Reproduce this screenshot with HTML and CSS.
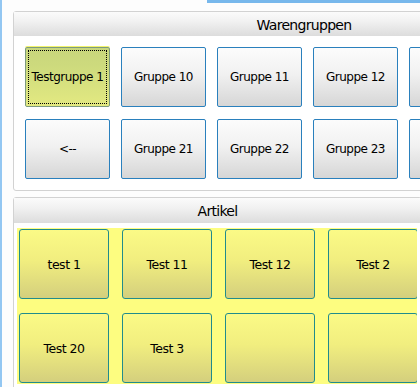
FILE: index.html
```html
<!DOCTYPE html>
<html lang="de">
<head>
    <meta charset="UTF-8">
    <meta name="viewport" content="width=device-width, initial-scale=1.0">
    <title>Kasse</title>
    <link rel="stylesheet" href="styles.css">
</head>
<body>
    <div class="window">
        <div class="top-line"></div>
        <div class="side-edge"></div>
        <div class="content">
            <!-- Warengruppen -->
            <div class="panel panel-groups">
                <div class="panel-header">Warengruppen</div>
                <div class="group-grid">
                    <button class="group-btn active"><span>Testgruppe 1</span></button>
                    <button class="group-btn">Gruppe 10</button>
                    <button class="group-btn">Gruppe 11</button>
                    <button class="group-btn">Gruppe 12</button>
                    <button class="group-btn"></button>
                    <button class="group-btn">&lt;--</button>
                    <button class="group-btn">Gruppe 21</button>
                    <button class="group-btn">Gruppe 22</button>
                    <button class="group-btn">Gruppe 23</button>
                    <button class="group-btn"></button>
                </div>
            </div>

            <!-- Artikel -->
            <div class="panel panel-articles">
                <div class="panel-header">Artikel</div>
                <div class="article-area">
                    <button class="article-btn">test 1</button>
                    <button class="article-btn">Test 11</button>
                    <button class="article-btn">Test 12</button>
                    <button class="article-btn">Test 2</button>
                    <button class="article-btn">Test 20</button>
                    <button class="article-btn">Test 3</button>
                    <button class="article-btn"></button>
                    <button class="article-btn"></button>
                </div>
            </div>
        </div>
    </div>
</body>
</html>
```

FILE: styles.css
```css
html, body {
    margin: 0;
    height: 100%;
}
body {
    background-color: #fdfdfd;
    font-family: 'DejaVu Sans', Verdana, sans-serif;
    color: #000;
    overflow: hidden;
}
.window {
    position: relative;
    display: flex;
    height: 100%;
}
/* blue window border pieces */
.top-line {
    position: absolute;
    top: 0;
    left: 207px;
    right: 0;
    height: 3px;
    background-color: #78b8ec;
}
.side-edge {
    width: 2px;
    flex-shrink: 0;
    background-color: #93c7f2;
}
.content {
    flex: 1;
    padding: 11px 0 0 11px;
    min-width: 0;
}
.panel {
    border: 1px solid #d2d2d2;
    border-radius: 3px;
    background-color: #fff;
    box-sizing: border-box;
}
.panel-header {
    background: linear-gradient(#fbfbfb, #f1f1f1 40%, #dcdcdc);
    text-align: center;
    font-size: 14px;
    letter-spacing: -0.7px;
}
.panel-groups {
    width: 582px;
    height: 180px;
}
.panel-groups .panel-header {
    height: 24px;
    line-height: 26px;
}
.group-grid {
    display: grid;
    grid-template-columns: repeat(5, 85px);
    grid-auto-rows: 60px;
    column-gap: 11px;
    row-gap: 12px;
    padding: 11px 0 0 11px;
}
.group-btn {
    font-family: inherit;
    font-size: 12px;
    letter-spacing: -0.5px;
    color: #000;
    border: 1px solid #2a80bd;
    border-radius: 2px;
    background: linear-gradient(#fcfcfc, #f1f1f1 45%, #d6d6d6);
    padding: 0;
    margin: 0;
}
.group-btn.active {
    position: relative;
    border-color: #7c9a7e;
    background: linear-gradient(#c8d67c, #cdda7d 30%, #e3e981);
    box-shadow: 0 -1px 0 #f2f36a;
}
.group-btn.active span {
    display: flex;
    align-items: center;
    justify-content: center;
    margin: 2px;
    height: 52px;
    border: 1px dotted #000;
}
.panel-articles {
    width: 409px;
    margin-top: 6px;
    height: 200px;
}
.panel-articles .panel-header {
    height: 25px;
    line-height: 26px;
}
.article-area {
    margin: 5px 4px 0 3px;
    background-color: #fdfd80;
    height: 156px;
    box-sizing: border-box;
    padding: 1px 0 1px 2px;
    display: grid;
    grid-template-columns: repeat(4, 90px);
    grid-auto-rows: 70px;
    column-gap: 13px;
    row-gap: 14px;
    overflow: hidden;
}
.article-btn {
    font-family: inherit;
    font-size: 12.5px;
    letter-spacing: -0.5px;
    color: #000;
    border: 1px solid #218c8c;
    border-radius: 3px;
    background: linear-gradient(#fbfa86, #f1ee7f 45%, #d4cf7d);
    padding: 0;
    margin: 0;
}
```
